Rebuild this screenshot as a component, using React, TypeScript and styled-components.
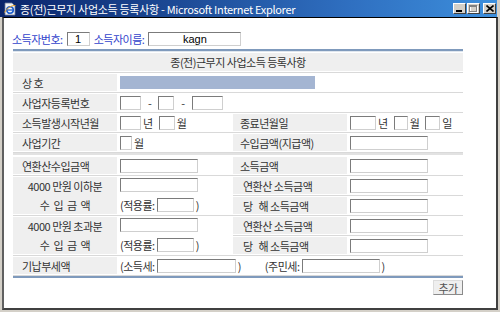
import React from 'react';
import styled, { createGlobalStyle } from 'styled-components';

const GlobalStyle = createGlobalStyle`
  html, body { margin: 0; padding: 0; background: #d4d0c8; }
  body { font-family: "Noto Sans CJK KR", "Noto Sans", sans-serif; font-size: 11px; color: #333; }
`;

const COLS = '104px 116px 114px 116px';

const Window = styled.div`
  width: 500px;
  height: 312px;
  box-sizing: border-box;
  background: #d4d0c8;
  display: flex;
  flex-direction: column;
  overflow: hidden;
`;

const TitleBar = styled.div`
  height: 17px;
  margin-right: 3px;
  display: flex;
  align-items: center;
  padding-left: 3px;
  background: linear-gradient(to right, #0a246a, #2f6fc0 70%, #3d8fdc);
  color: #fff;
`;

const Title = styled.div`
  flex: 1;
  margin-left: 3px;
  font-size: 11px;
  letter-spacing: -0.3px;
  white-space: nowrap;
`;

const Controls = styled.div`
  display: flex;
  gap: 1px;
  margin-right: 1px;
`;

const CtrlBtn = styled.div<{ $gap?: boolean }>`
  width: 13px;
  height: 11px;
  box-sizing: border-box;
  margin-left: ${p => (p.$gap ? '2px' : '0')};
  background: #d4d0c8;
  border: 1px solid;
  border-color: #fff #404040 #404040 #fff;
  display: flex;
  align-items: center;
  justify-content: center;
`;

const Client = styled.div`
  flex: 1;
  margin: 0 2px 2px 2px;
  background: #fff;
  border-top: 1px solid #000;
  border-left: 2px solid #606060;
  border-right: 2px solid #404040;
  border-bottom: 2px solid #404040;
  padding: 14px 0 0 8px;
`;

const TopForm = styled.div`
  display: flex;
  align-items: center;
  gap: 4px;
  height: 14px;
`;

const BlueLabel = styled.span`
  color: #3344cc;
  letter-spacing: -0.5px;
`;

const Input = styled.div<{ $w: number }>`
  width: ${p => p.$w}px;
  height: 14px;
  box-sizing: border-box;
  background: #fff;
  border: 1px solid;
  border-color: #7b7b7b #cfcfcf #cfcfcf #7b7b7b;
  font-family: "Liberation Sans", Arial, sans-serif;
  font-size: 11px;
  line-height: 12px;
  text-align: center;
  color: #000;
`;

const Sheet = styled.div`
  width: 450px;
  margin: 3px 0 0 1px;
  border-top: 2px solid #7f9abc;
  box-shadow: inset 0 1px 0 #dfe6ee;
  padding-top: 1px;
  border-bottom: 2px solid #7f9abc;
`;

const Row = styled.div`
  display: grid;
  grid-template-columns: ${COLS};
  padding: 1px 0;
  border-bottom: 1px solid #d9d9d9;
`;

const HeadRow = styled.div`
  padding: 1px 0;
  border-bottom: 1px solid #d9d9d9;
`;

const Head = styled.div`
  height: 18px;
  background: #efefef;
  display: flex;
  align-items: center;
  justify-content: center;
  letter-spacing: -0.5px;
`;

const Label = styled.div<{ $pad?: number; $tall?: boolean }>`
  height: ${p => (p.$tall ? '37px' : '17px')};
  background: #efefef;
  display: flex;
  flex-direction: ${p => (p.$tall ? 'column' : 'row')};
  align-items: center;
  justify-content: ${p => (p.$tall ? 'space-around' : 'flex-start')};
  padding-left: ${p => (p.$tall ? 0 : p.$pad ?? 9)}px;
  white-space: pre;
  letter-spacing: -0.5px;
`;

const Value = styled.div<{ $span?: number; $stack?: boolean }>`
  grid-column: span ${p => p.$span ?? 1};
  display: flex;
  flex-direction: ${p => (p.$stack ? 'column' : 'row')};
  justify-content: ${p => (p.$stack ? 'space-around' : 'flex-start')};
  align-items: ${p => (p.$stack ? 'flex-start' : 'center')};
  padding-left: 3px;
  gap: 2px;
  letter-spacing: -0.5px;
`;

const Line = styled.div`
  display: flex;
  align-items: center;
  gap: 2px;
`;

const Unit = styled.span`
  margin-right: 4px;
`;

const Dash = styled.span`
  margin: 0 5px;
`;

const NameBar = styled.div`
  width: 195px;
  height: 13px;
  background: #a4b5d2;
`;

const Sub = styled.div`
  grid-column: span 2;
  display: flex;
  flex-direction: column;
`;

const SubRow = styled.div<{ $first?: boolean }>`
  display: grid;
  grid-template-columns: 114px 116px;
  padding: ${p => (p.$first ? '0 0 1px 0' : '1px 0 0 0')};
  border-bottom: ${p => (p.$first ? '1px solid #d9d9d9' : 'none')};
`;

const Divider = styled.div`
  height: 2px;
  background: #e2e2e2;
  margin-bottom: 1px;
`;

const Group = styled.div<{ $gapLeft?: number }>`
  display: flex;
  align-items: center;
  gap: 2px;
  margin-left: ${p => p.$gapLeft ?? 0}px;
`;

const Actions = styled.div`
  width: 451px;
  display: flex;
  justify-content: flex-end;
  margin-top: 2px;
`;

const Button = styled.div`
  width: 30px;
  height: 15px;
  box-sizing: border-box;
  background: #efefef;
  border: 1px solid;
  border-color: #dcdcdc #8a8a8a #8a8a8a #dcdcdc;
  display: flex;
  align-items: center;
  justify-content: center;
  color: #555;
  letter-spacing: -0.5px;
`;

const IeIcon = () => (
  <svg width="14" height="14" viewBox="0 0 14 14">
    <path d="M2 1h7l3 3v9H2z" fill="#f4f4f4" stroke="#6a7a9a" strokeWidth="0.8" />
    <circle cx="7" cy="8" r="3.3" fill="none" stroke="#1e5fd0" strokeWidth="1.6" />
    <path d="M4 8h6" stroke="#1e5fd0" strokeWidth="1.3" />
    <path d="M1.5 10.5C4 6 9 3 12.5 3.5" fill="none" stroke="#e8a020" strokeWidth="1" />
  </svg>
);

const MinGlyph = () => (
  <svg width="7" height="7" viewBox="0 0 7 7"><rect x="0" y="5" width="6" height="2" fill="#000" /></svg>
);

const MaxGlyph = () => (
  <svg width="9" height="8" viewBox="0 0 9 8">
    <rect x="1.5" y="1.5" width="7" height="6" fill="none" stroke="#fff" />
    <rect x="0.5" y="0.5" width="7" height="6" fill="none" stroke="#808080" />
    <rect x="0" y="0" width="8" height="2" fill="#808080" />
  </svg>
);

const CloseGlyph = () => (
  <svg width="8" height="7" viewBox="0 0 8 7">
    <path d="M0.5 0.5l7 6M7.5 0.5l-7 6" stroke="#000" strokeWidth="1.6" />
  </svg>
);

export default function App() {
  return (
    <>
      <GlobalStyle />
      <Window>
        <TitleBar>
          <IeIcon />
          <Title>종(전)근무지 사업소득 등록사항 - Microsoft Internet Explorer</Title>
          <Controls>
            <CtrlBtn><MinGlyph /></CtrlBtn>
            <CtrlBtn><MaxGlyph /></CtrlBtn>
            <CtrlBtn $gap><CloseGlyph /></CtrlBtn>
          </Controls>
        </TitleBar>
        <Client>
          <TopForm>
            <BlueLabel>소득자번호:</BlueLabel>
            <Input $w={23}>1</Input>
            <BlueLabel>소득자이름:</BlueLabel>
            <Input $w={93}>kagn</Input>
          </TopForm>

          <Sheet>
            <HeadRow><Head>종(전)근무지 사업소득 등록사항</Head></HeadRow>

            <Row>
              <Label>상 호</Label>
              <Value $span={3}><NameBar /></Value>
            </Row>

            <Row>
              <Label>사업자등록번호</Label>
              <Value $span={3}>
                <Input $w={21} /><Dash>-</Dash><Input $w={16} /><Dash>-</Dash><Input $w={31} />
              </Value>
            </Row>

            <Row>
              <Label>소득발생시작년월</Label>
              <Value><Input $w={21} /><Unit>년</Unit><Input $w={16} /><Unit>월</Unit></Value>
              <Label $pad={7}>종료년월일</Label>
              <Value><Input $w={26} /><Unit>년</Unit><Input $w={14} /><Unit>월</Unit><Input $w={15} /><Unit>일</Unit></Value>
            </Row>

            <Row>
              <Label>사업기간</Label>
              <Value><Input $w={12} /><Unit>월</Unit></Value>
              <Label $pad={7}>수입금액(지급액)</Label>
              <Value><Input $w={78} /></Value>
            </Row>

            <Divider />

            <Row>
              <Label>연환산수입금액</Label>
              <Value><Input $w={78} /></Value>
              <Label $pad={7}>소득금액</Label>
              <Value><Input $w={78} /></Value>
            </Row>

            <Row>
              <Label $tall><span>4000 만원 이하분</span><span>수  입  금  액</span></Label>
              <Value $stack>
                <Line><Input $w={78} /></Line>
                <Line>(적용률:<Input $w={37} />)</Line>
              </Value>
              <Sub>
                <SubRow $first><Label $pad={10}>연환산 소득금액</Label><Value><Input $w={78} /></Value></SubRow>
                <SubRow><Label $pad={10}>{'당   해 소득금액'}</Label><Value><Input $w={78} /></Value></SubRow>
              </Sub>
            </Row>

            <Row>
              <Label $tall><span>4000 만원 초과분</span><span>수  입  금  액</span></Label>
              <Value $stack>
                <Line><Input $w={78} /></Line>
                <Line>(적용률:<Input $w={37} />)</Line>
              </Value>
              <Sub>
                <SubRow $first><Label $pad={10}>연환산 소득금액</Label><Value><Input $w={78} /></Value></SubRow>
                <SubRow><Label $pad={10}>{'당   해 소득금액'}</Label><Value><Input $w={78} /></Value></SubRow>
              </Sub>
            </Row>

            <Row>
              <Label>기납부세액</Label>
              <Value $span={3}>
                <Group>(소득세:<Input $w={79} />)</Group>
                <Group $gapLeft={22}>(주민세:<Input $w={78} />)</Group>
              </Value>
            </Row>
          </Sheet>

          <Actions><Button>추가</Button></Actions>
        </Client>
      </Window>
    </>
  );
}
